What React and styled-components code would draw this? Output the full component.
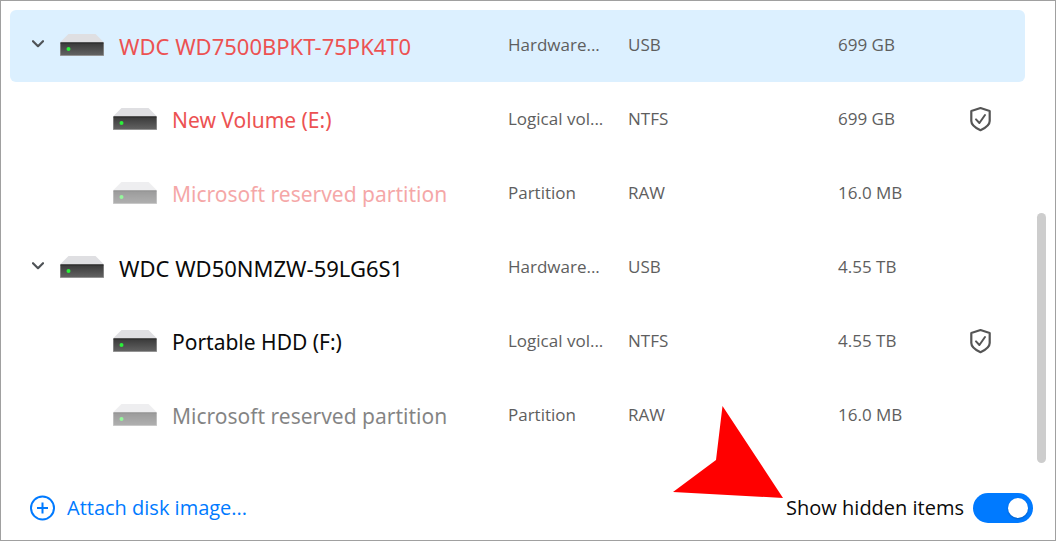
import { useState } from "react";
import styled, { createGlobalStyle, ThemeProvider } from "styled-components";

const theme = {
  color: {
    text: "#0a0a0a",
    muted: "#5e5e5e",
    danger: "#ec5252",
    accent: "#007aff",
    selected: "#dcf0ff",
    frame: "#a0a0a0",
    thumb: "#cdcdcd",
  },
};

const GlobalStyle = createGlobalStyle`
  *, *::before, *::after {
    box-sizing: border-box;
  }

  body {
    margin: 0;
    background-color: #fff;
    font-family: "Open Sans", "Noto Sans", sans-serif;
  }
`;

const StyledWindow = styled.main`
  ${({ theme }) =>
    `
    display: flex;
    flex-direction: column;
    min-height: 100vh;
    border: 1px solid ${theme.color.frame};
    color: ${theme.color.text};
`}
`;

const StyledListArea = styled.div`
  display: flex;
  flex-grow: 1;
  gap: 12px;
  padding: 7px 9px 30px;
`;

const StyledScrollbar = styled.div`
  display: flex;
  flex-direction: column;
  justify-content: flex-end;
  width: 9px;
`;

const StyledThumb = styled.div`
  ${({ theme }) =>
    `
    height: 55%;
    border-radius: 5px;
    background-color: ${theme.color.thumb};
`}
`;

const StyledTable = styled.table`
  flex: 1;
  align-self: flex-start;
  table-layout: fixed;
  border-collapse: separate;
  border-spacing: 0 2px;
  text-align: left;
`;

const StyledCol = styled.col`
  width: ${({ $width }) => `${$width}px`};
`;

const StyledRow = styled.tr`
  ${({ theme, $selected }) =>
    `
    height: 72px;
    background-color: ${$selected ? theme.color.selected : "transparent"};
`}
`;

const StyledNameCell = styled.th`
  padding: 0;
  border-radius: 6px 0 0 6px;
  font-weight: normal;
`;

const StyledName = styled.div`
  ${({ theme, $child, $danger }) =>
    `
    display: flex;
    align-items: center;
    padding-left: ${$child ? 103 : 22}px;
    color: ${$danger ? theme.color.danger : theme.color.text};
    font-family: "Noto Sans", sans-serif;
    font-size: ${$child ? 21 : 22}px;
    line-height: 30px;
    white-space: nowrap;
`}
`;

const StyledFaded = styled.span`
  display: flex;
  align-items: center;
  gap: 15px;
  opacity: ${({ $faded }) => ($faded ? 0.5 : 1)};

  svg {
    margin-bottom: 2px;
  }
`;

const StyledCell = styled.td`
  ${({ theme }) =>
    `
    padding: 0 0 2px;
    color: ${theme.color.muted};
    font-size: 17px;
    line-height: 24px;
    white-space: nowrap;

    &:last-child {
      border-radius: 0 6px 6px 0;
    }

    svg {
      display: block;
    }
`}
`;

const StyledExpander = styled.button`
  display: flex;
  margin: 0 16px 4px 0;
  padding: 0;
  border: none;
  background: none;
  cursor: pointer;

  svg {
    transform: ${({ $open }) => ($open ? "none" : "rotate(-90deg)")};
  }
`;

const StyledFooter = styled.footer`
  display: flex;
  align-items: center;
  justify-content: space-between;
  padding: 0 22px 17px 28px;
  font-size: 20px;
  line-height: 30px;
`;

const StyledAttachButton = styled.button`
  ${({ theme }) =>
    `
    display: flex;
    align-items: center;
    gap: 12px;
    padding: 0;
    border: none;
    background: none;
    color: ${theme.color.accent};
    font: inherit;
    cursor: pointer;
`}
`;

const StyledToggleLabel = styled.label`
  position: relative;
  display: flex;
  align-items: center;
  gap: 9px;
  cursor: pointer;
`;

const StyledToggle = styled.input`
  ${({ theme }) =>
    `
    appearance: none;
    display: flex;
    align-items: center;
    width: 60px;
    height: 30px;
    margin: 0;
    padding: 0 5px;
    border-radius: 15px;
    background-color: ${theme.color.thumb};
    cursor: pointer;

    &::before {
      content: "";
      width: 20px;
      height: 20px;
      border-radius: 50%;
      background-color: #fff;
      box-shadow: 0 1px 2px rgba(0, 0, 0, 0.25);
    }

    &:checked {
      justify-content: flex-end;
      background-color: ${theme.color.accent};
    }
`}
`;

const StyledPointer = styled.svg`
  position: absolute;
  right: 250px;
  bottom: 25px;
  pointer-events: none;
`;

const DriveIcon = () => (
  <svg width="44" height="24" viewBox="0 0 44 24" aria-hidden="true">
    <defs>
      <linearGradient id="driveFront" x1="0" y1="0" x2="0" y2="1">
        <stop offset="0" stopColor="#383838" />
        <stop offset="1" stopColor="#626262" />
      </linearGradient>
    </defs>
    <path d="M8.5 1h27L44 9.5H0z" fill="#dfdfe2" />
    <path d="M0 9.4h44V23H0z" fill="#a3a3a3" />
    <path d="M.6 9.4h42.8v12.8H.6z" fill="url(#driveFront)" />
    <path d="M.6 9.4h42.8v1H.6z" fill="#2b2b2b" />
    <circle cx="8.5" cy="16" r="2" fill="#2bf03a" />
  </svg>
);

const ChevronIcon = () => (
  <svg width="12" height="8" viewBox="0 0 12 8" aria-hidden="true">
    <path
      d="M1 1.2l5 5 5-5"
      fill="none"
      stroke="#4f5357"
      strokeWidth="2.2"
      strokeLinecap="round"
      strokeLinejoin="round"
    />
  </svg>
);

const ShieldIcon = () => (
  <svg
    width="22"
    height="26"
    viewBox="0 0 22 26"
    fill="none"
    stroke="#555"
    strokeLinecap="round"
    strokeLinejoin="round"
    role="img"
    aria-label="Protected"
  >
    <path
      d="M11.5 2l9.2 3v10c0 4.5-4.7 7.2-9.2 9.2-4.5-2-9.2-4.700-9.2-9.2V5z"
      strokeWidth="2.2"
    />
    <path d="M7 13.4l3.4 3.6 5.6-8" strokeWidth="2" />
  </svg>
);

const PlusIcon = () => (
  <svg
    width="26"
    height="26"
    viewBox="0 0 26 26"
    fill="none"
    stroke="currentColor"
    strokeWidth="2"
    aria-hidden="true"
  >
    <circle cx="13.5" cy="13" r="11.5" />
    <path d="M13.5 7.5v11M8 13h11" />
  </svg>
);

const disks = [
  {
    name: "WDC WD7500BPKT-75PK4T0",
    type: "Hardware...",
    connection: "USB",
    size: "699 GB",
    danger: true,
    selected: true,
    volumes: [
      {
        name: "New Volume (E:)",
        type: "Logical vol...",
        connection: "NTFS",
        size: "699 GB",
        danger: true,
        shield: true,
      },
      {
        name: "Microsoft reserved partition",
        type: "Partition",
        connection: "RAW",
        size: "16.0 MB",
        danger: true,
        hidden: true,
      },
    ],
  },
  {
    name: "WDC WD50NMZW-59LG6S1",
    type: "Hardware...",
    connection: "USB",
    size: "4.55 TB",
    volumes: [
      {
        name: "Portable HDD (F:)",
        type: "Logical vol...",
        connection: "NTFS",
        size: "4.55 TB",
        shield: true,
      },
      {
        name: "Microsoft reserved partition",
        type: "Partition",
        connection: "RAW",
        size: "16.0 MB",
        hidden: true,
      },
    ],
  },
];

const DiskRow = ({ item, child, open, onToggle }) => (
  <StyledRow $selected={item.selected}>
    <StyledNameCell scope="row">
      <StyledName $child={child} $danger={item.danger}>
        {!child && (
          <StyledExpander
            type="button"
            $open={open}
            aria-expanded={open}
            aria-label={`Volumes of ${item.name}`}
            onClick={onToggle}
          >
            <ChevronIcon />
          </StyledExpander>
        )}
        <StyledFaded $faded={item.hidden}>
          <DriveIcon />
          {item.name}
        </StyledFaded>
      </StyledName>
    </StyledNameCell>
    <StyledCell>{item.type}</StyledCell>
    <StyledCell>{item.connection}</StyledCell>
    <StyledCell>{item.size}</StyledCell>
    <StyledCell>{item.shield && <ShieldIcon />}</StyledCell>
  </StyledRow>
);

const App = () => {
  const [showHidden, setShowHidden] = useState(true);
  const [closed, setClosed] = useState([]);

  const toggleDisk = (name) =>
    setClosed((names) =>
      names.includes(name) ? names.filter((n) => n !== name) : [...names, name]
    );

  return (
    <ThemeProvider theme={theme}>
      <GlobalStyle />
      <StyledWindow>
        <StyledListArea>
          <StyledTable>
            <colgroup>
              <col />
              <StyledCol $width={120} />
              <StyledCol $width={210} />
              <StyledCol $width={131} />
              <StyledCol $width={56} />
            </colgroup>
            {disks.map((disk) => {
              const open = !closed.includes(disk.name);

              return (
                <tbody key={disk.name}>
                  <DiskRow
                    item={disk}
                    open={open}
                    onToggle={() => toggleDisk(disk.name)}
                  />
                  {open &&
                    disk.volumes
                      .filter((volume) => showHidden || !volume.hidden)
                      .map((volume) => (
                        <DiskRow key={volume.name} item={volume} child />
                      ))}
                </tbody>
              );
            })}
          </StyledTable>
          <StyledScrollbar>
            <StyledThumb />
          </StyledScrollbar>
        </StyledListArea>
        <StyledFooter>
          <StyledAttachButton type="button">
            <PlusIcon />
            Attach disk image...
          </StyledAttachButton>
          <StyledToggleLabel>
            Show hidden items
            <StyledToggle
              type="checkbox"
              role="switch"
              checked={showHidden}
              onChange={(e) => setShowHidden(e.target.checked)}
            />
            <StyledPointer
              width="110"
              height="92"
              viewBox="0 0 110 92"
              aria-hidden="true"
            >
              <path d="M49.5 0L110 92 0 86 43 54z" fill="#f00" />
            </StyledPointer>
          </StyledToggleLabel>
        </StyledFooter>
      </StyledWindow>
    </ThemeProvider>
  );
};

export default App;
